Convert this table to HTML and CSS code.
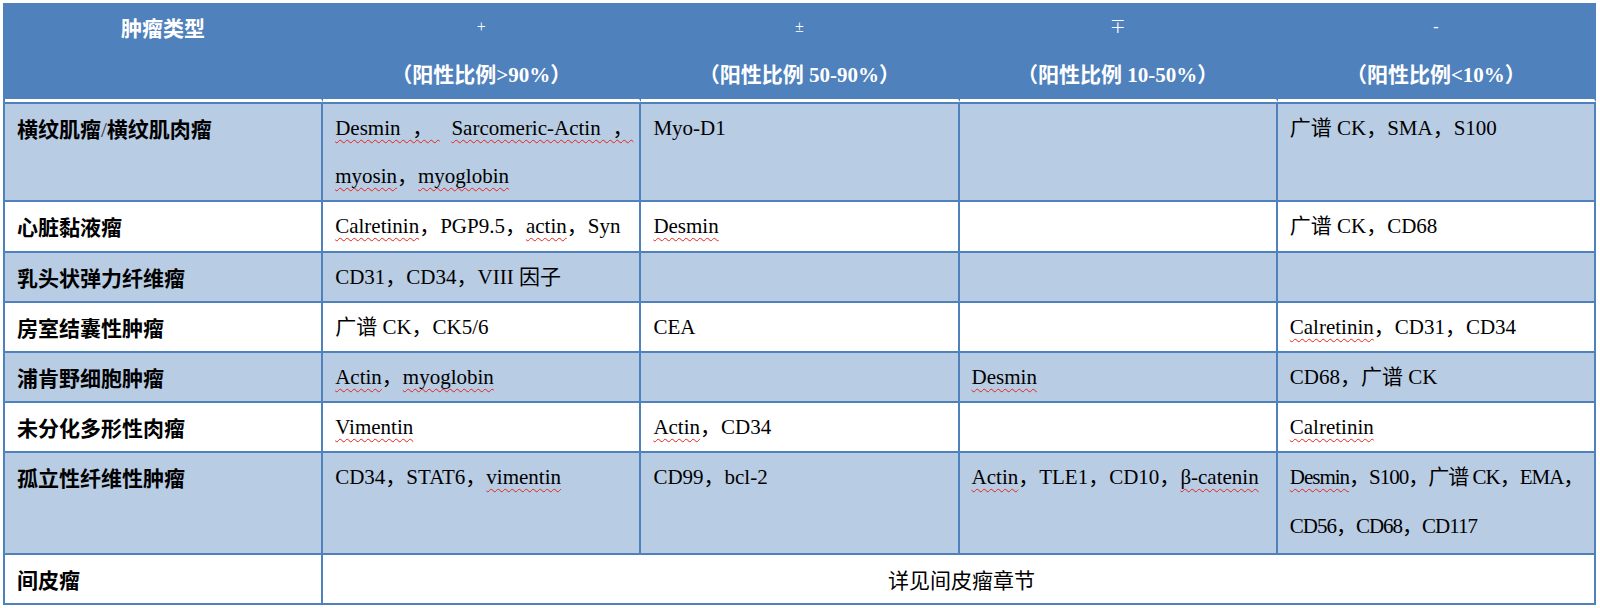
FILE: index.html
```html
<!DOCTYPE html>
<html lang="zh-CN">
<head>
<meta charset="utf-8">
<title>心脏肿瘤免疫组化表达</title>
<link rel="stylesheet" href="styles.css">
</head>
<body>
<table class="ihc">
  <colgroup>
    <col class="c"><col class="c"><col class="c"><col class="c"><col class="c">
  </colgroup>
  <thead>
    <tr>
      <th class="type"><span class="hl">肿瘤类型</span></th>
      <th><span class="hl sym">+</span><span class="hl">（阳性比例&gt;90%）</span></th>
      <th><span class="hl sym">±</span><span class="hl">（阳性比例 50-90%）</span></th>
      <th><span class="hl sym">∓</span><span class="hl">（阳性比例 10-50%）</span></th>
      <th><span class="hl sym">-</span><span class="hl">（阳性比例&lt;10%）</span></th>
    </tr>
  </thead>
  <tbody>
    <tr class="band">
      <td class="name">横纹肌瘤<span class="slash">/</span>横纹肌肉瘤</td>
      <td><span class="just"><span class="sp">Desmin ，</span> <span class="sp">Sarcomeric-Actin ，</span></span><span class="sp">myosin</span>，<span class="sp">myoglobin</span></td>
      <td>Myo-D1</td>
      <td></td>
      <td>广谱 CK，SMA，S100</td>
    </tr>
    <tr>
      <td class="name">心脏黏液瘤</td>
      <td><span class="sp">Calretinin</span>，PGP9.5，<span class="sp">actin</span>，Syn</td>
      <td><span class="sp">Desmin</span></td>
      <td></td>
      <td>广谱 CK，CD68</td>
    </tr>
    <tr class="band">
      <td class="name">乳头状弹力纤维瘤</td>
      <td>CD31，CD34，VIII 因子</td>
      <td></td>
      <td></td>
      <td></td>
    </tr>
    <tr>
      <td class="name">房室结囊性肿瘤</td>
      <td>广谱 CK，CK5/6</td>
      <td>CEA</td>
      <td></td>
      <td><span class="sp">Calretinin</span>，CD31，CD34</td>
    </tr>
    <tr class="band">
      <td class="name">浦肯野细胞肿瘤</td>
      <td><span class="sp">Actin</span>，<span class="sp">myoglobin</span></td>
      <td></td>
      <td><span class="sp">Desmin</span></td>
      <td>CD68，广谱 CK</td>
    </tr>
    <tr>
      <td class="name">未分化多形性肉瘤</td>
      <td><span class="sp">Vimentin</span></td>
      <td><span class="sp">Actin</span>，CD34</td>
      <td></td>
      <td><span class="sp">Calretinin</span></td>
    </tr>
    <tr class="band tall">
      <td class="name">孤立性纤维性肿瘤</td>
      <td>CD34，STAT6，<span class="sp">vimentin</span></td>
      <td>CD99，bcl-2</td>
      <td><span class="sp">Actin</span>，TLE1，CD10，<span class="sp">β-catenin</span></td>
      <td class="tight"><span class="sp">Desmin</span>，S100，广谱 CK，EMA，<br>CD56，CD68，CD117</td>
    </tr>
    <tr>
      <td class="name">间皮瘤</td>
      <td class="merged" colspan="4">详见间皮瘤章节</td>
    </tr>
  </tbody>
</table>
</body>
</html>
```

FILE: styles.css
```css
html,
body {
  margin: 0;
  padding: 0;
  background: #ffffff;
}

body {
  padding: 3px 0 0 3px;
  font-family: "Liberation Serif", "Noto Sans CJK SC", serif;
  font-size: 21px;
  color: #000000;
}

.ihc {
  border-collapse: separate;
  border-spacing: 0;
  table-layout: fixed;
  width: 1593px;
  border-left: 2px solid #4f81bd;
}

.ihc col.c {
  width: 20%;
}

.ihc th {
  background: #4f81bd;
  color: #ffffff;
  font-weight: bold;
  text-align: center;
  vertical-align: top;
  padding: 0;
  line-height: 48px;
  border-right: 2px solid #4f81bd;
  border-bottom: 3px solid #ffffff;
}

.hl {
  display: block;
  height: 48px;
}

.sym {
  font-weight: normal;
  font-size: 16px;
}

.type {
  font-family: "Noto Sans CJK SC", sans-serif;
}

.ihc td {
  vertical-align: top;
  padding: 0 6px 0 12px;
  line-height: 48.2px;
  border-right: 2px solid #4f81bd;
  border-bottom: 2px solid #4f81bd;
  background: #ffffff;
}

.ihc tbody tr:first-child td {
  border-top: 2px solid #4f81bd;
}

.ihc tr.band td {
  background: #b8cce4;
}

.ihc tr.tall td {
  padding-bottom: 3px;
}

.name {
  font-family: "Noto Sans CJK SC", sans-serif;
  font-weight: bold;
}

.slash {
  font-family: "Liberation Serif", serif;
  font-weight: normal;
  color: #333333;
}

.sp {
  text-decoration: underline wavy #e8221a;
  text-decoration-thickness: 1px;
  text-underline-offset: 4px;
  text-decoration-skip-ink: none;
}

.just {
  display: block;
  text-align: justify;
  text-align-last: justify;
}

.tight {
  letter-spacing: -1px;
}

.ihc td.merged {
  text-align: center;
  font-family: "Noto Sans CJK SC", sans-serif;
}
```
